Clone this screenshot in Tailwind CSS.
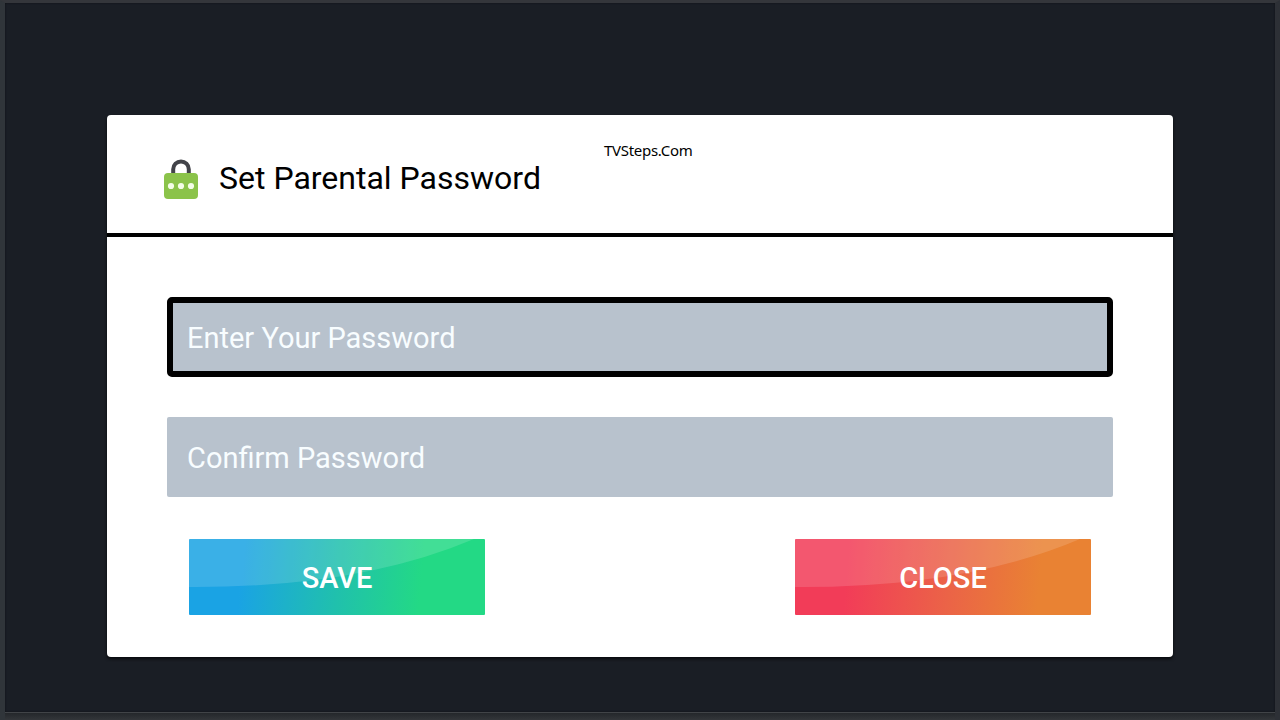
<!DOCTYPE html>
<html lang="en">
<head>
<meta charset="utf-8">
<title>Set Parental Password</title>
<script src="https://cdn.jsdelivr.net/npm/@tailwindcss/browser@4"></script>
</head>
<body class="w-[1280px] h-[720px] overflow-hidden bg-[#2b2f34] font-['Roboto',sans-serif]">
<div class="w-full h-full flex flex-col border-t-[3px] border-t-[#34363b] border-l-[5px] border-l-[#30353a] border-r-[5px] border-r-[#2d3036]">
  <main class="h-[710px] shrink-0 bg-[#1a1e25] border-b border-b-[#414448] pt-28 px-[102px] shadow-[inset_0_0_2px_#0c0f13]">
    <section class="w-[1066px] h-[542px] bg-white rounded-[4px] shadow-[0_2px_3px_#080a0d]">
      <header class="h-[122px] border-b-4 border-black flex pl-[57px]">
        <svg class="w-[34px] h-10 mt-11 shrink-0" viewBox="0 0 34 40">
          <path d="M9.2 17V10.2a7.8 7.8 0 0 1 15.6 0V17" fill="none" stroke="#424349" stroke-width="4"/>
          <rect y="14" width="34" height="26" rx="4" fill="#8bc34a"/>
          <g fill="#f4fde8"><circle cx="7" cy="27" r="3.1"/><circle cx="17" cy="27" r="3.1"/><circle cx="27" cy="27" r="3.1"/></g>
        </svg>
        <h1 class="ml-[21px] mt-[43px] w-[385px] shrink-0 text-[32px] leading-10 text-black whitespace-nowrap">Set Parental Password</h1>
        <span class="mt-6 text-[15px] leading-[22px] tracking-[-0.3px] text-black font-['Noto_Sans',sans-serif] whitespace-nowrap">TVSteps.Com</span>
      </header>
      <div class="px-[60px] pt-[60px] flex flex-col">
        <div class="h-20 rounded-[5px] border-6 border-black bg-[#b8c2cd] flex items-center pl-[14px] pt-[3px] text-[29px] text-[#f8fdff] whitespace-nowrap"><span>Enter Your Password</span></div>
        <div class="h-20 mt-10 rounded-[2px] bg-[#b8c2cd] flex items-center pl-5 pt-[3px] text-[29px] text-[#f8fdff] whitespace-nowrap"><span>Confirm Password</span></div>
        <div class="mt-[42px] px-[22px] flex justify-between text-[29px] font-medium text-white">
          <button class="w-[296px] h-[76px] pt-[3px] rounded-[1px] overflow-hidden relative bg-linear-[95deg] from-[#1aa3e4] from-18% via-[#20c0ad] via-50% to-[#23d985] to-78%">
            <svg class="absolute inset-0" width="296" height="76" viewBox="0 0 296 76"><path d="M0 48Q170 49 285 0H0Z" fill="#fff" fill-opacity=".14"/></svg>
            <span class="relative">SAVE</span>
          </button>
          <button class="w-[296px] h-[76px] pt-[3px] rounded-[1px] overflow-hidden relative bg-linear-[95deg] from-[#f23c58] from-18% via-[#eb6347] via-52% to-[#e98233] to-82%">
            <svg class="absolute inset-0" width="296" height="76" viewBox="0 0 296 76"><path d="M0 48Q170 49 285 0H0Z" fill="#fff" fill-opacity=".14"/></svg>
            <span class="relative">CLOSE</span>
          </button>
        </div>
      </div>
    </section>
  </main>
  <div class="grow bg-linear-to-b from-[#24272b] to-[#33363a]"></div>
</div>
</body>
</html>
